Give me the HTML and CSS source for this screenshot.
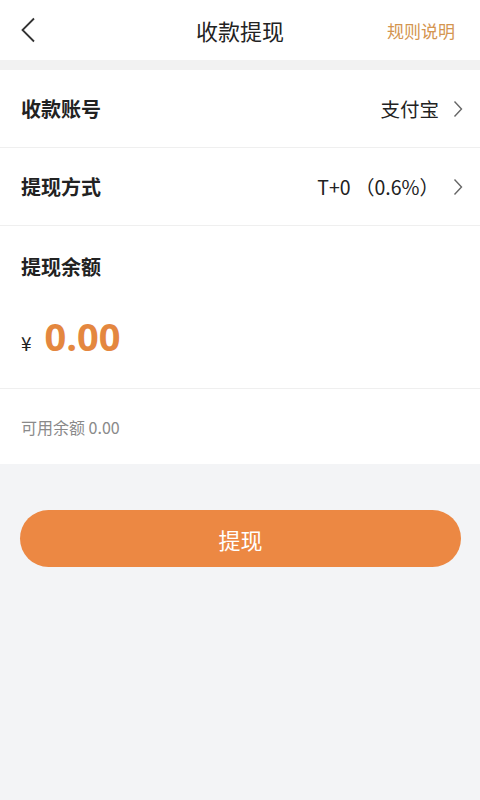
FILE: index.html
```html
<!DOCTYPE html>
<html lang="zh">
<head>
<meta charset="utf-8">
<link rel="stylesheet" href="styles.css">
</head>
<body>
<div class="page">
  <header class="nav">
    <svg class="back" width="16" height="26" viewBox="0 0 16 26"><path d="M14 1.5 L2.5 13 L14 24.5" fill="none" stroke="#333" stroke-width="1.8"/></svg>
    <div class="title">收款提现</div>
    <div class="rule">规则说明</div>
  </header>
  <div class="gap"></div>
  <section class="card">
    <div class="row">
      <span class="label">收款账号</span>
      <span class="value">支付宝<svg class="chev" width="10" height="18" viewBox="0 0 10 18"><path d="M1.5 1.5 L8.5 9 L1.5 16.5" fill="none" stroke="#666" stroke-width="1.4"/></svg></span>
    </div>
    <div class="row">
      <span class="label">提现方式</span>
      <span class="value">T+0 （0.6%）<svg class="chev" width="10" height="18" viewBox="0 0 10 18"><path d="M1.5 1.5 L8.5 9 L1.5 16.5" fill="none" stroke="#666" stroke-width="1.4"/></svg></span>
    </div>
    <div class="amount-block">
      <div class="label">提现余额</div>
      <div class="amount"><span class="yen">¥</span><span class="num">0.00</span></div>
    </div>
    <div class="avail">可用余额 0.00</div>
  </section>
  <div class="btn-wrap">
    <button class="btn">提现</button>
  </div>
</div>
</body>
</html>
```

FILE: styles.css
```css
* { box-sizing: border-box; }
html, body { margin: 0; padding: 0; }
body {
  background: #f3f4f6;
  font-family: "Noto Sans CJK SC", "Noto Sans", sans-serif;
  color: #222;
  width: 480px;
  height: 800px;
  overflow: hidden;
}
.nav {
  height: 60px;
  background: #fff;
  display: flex;
  align-items: center;
  justify-content: space-between;
  padding: 0 25px 0 20px;
  position: relative;
}
.back { display: block; }
.title {
  position: absolute;
  left: 0; right: 0;
  text-align: center;
  font-size: 22px;
  color: #222;
  pointer-events: none;
}
.rule {
  font-size: 17px;
  color: #d4954f;
}
.gap { height: 10px; background: #f2f2f2; }
.card { background: #fff; }
.row {
  height: 78px;
  display: flex;
  align-items: center;
  justify-content: space-between;
  padding: 0 17px 0 21px;
  border-bottom: 1px solid #efefef;
}
.label {
  font-size: 20px;
  font-weight: 700;
  color: #222;
}
.value {
  display: flex;
  align-items: center;
  font-size: 19.5px;
  color: #222;
}
.value, .avail { font-family: "Noto Sans CJK SC", sans-serif; }
.chev { margin-left: 14px; display: block; }
.amount-block {
  padding: 26px 21px 0;
  height: 163px;
  border-bottom: 1px solid #efefef;
}
.amount {
  display: flex;
  align-items: baseline;
  margin-top: 36px;
}
.yen { font-size: 19px; color: #222; margin-right: 13px; }
.num {
  font-family: "Open Sans", "Noto Sans", sans-serif;
  font-size: 38px;
  font-weight: 700;
  color: #e4873f;
  line-height: 1;
}
.avail {
  height: 75px;
  padding: 0 21px;
  display: flex;
  align-items: center;
  font-size: 16px;
  color: #8a8a8a;
}
.btn-wrap { padding: 46px 19px 0 20px; }
.btn {
  width: 100%;
  height: 57px;
  border: none;
  border-radius: 29px;
  background: #ec8843;
  color: #fff;
  font-family: "Noto Sans CJK SC", sans-serif;
  font-size: 22px;
  display: block;
}
```
